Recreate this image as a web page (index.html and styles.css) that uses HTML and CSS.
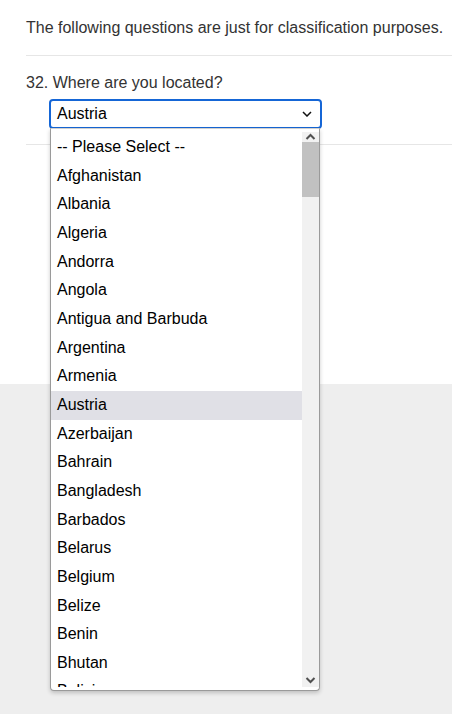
FILE: index.html
```html
<!DOCTYPE html>
<html>
<head>
<meta charset="utf-8">
<link rel="stylesheet" href="styles.css">
</head>
<body>
<div class="page">
  <section class="content">
    <p class="intro">The following questions are just for classification purposes.</p>
    <hr class="rule">
    <div class="question">
      <label class="q-label">32. Where are you located?</label>
      <div class="select">
        <span class="select-value">Austria</span>
        <svg class="chev" width="10" height="6" viewBox="0 0 10 6"><polyline points="1,1 5,5 9,1" fill="none" stroke="#111" stroke-width="1.5"/></svg>
      </div>
    </div>
    <hr class="rule rule-2">
  </section>
  <div class="footer-area"></div>

  <div class="dropdown">
    <ul class="options">
      <li>-- Please Select --</li>
      <li>Afghanistan</li>
      <li>Albania</li>
      <li>Algeria</li>
      <li>Andorra</li>
      <li>Angola</li>
      <li>Antigua and Barbuda</li>
      <li>Argentina</li>
      <li>Armenia</li>
      <li class="selected">Austria</li>
      <li>Azerbaijan</li>
      <li>Bahrain</li>
      <li>Bangladesh</li>
      <li>Barbados</li>
      <li>Belarus</li>
      <li>Belgium</li>
      <li>Belize</li>
      <li>Benin</li>
      <li>Bhutan</li>
      <li>Bolivia</li>
    </ul>
    <div class="scrollbar">
      <svg class="arrow" width="17" height="10" viewBox="0 0 17 10"><polyline points="4.5,7 8.5,3 12.5,7" fill="none" stroke="#505050" stroke-width="2"/></svg>
      <div class="thumb"></div>
      <div class="track"></div>
      <svg class="arrow" width="17" height="14" viewBox="0 0 17 14"><polyline points="4.5,5 8.5,9 12.5,5" fill="none" stroke="#505050" stroke-width="2"/></svg>
    </div>
  </div>
</div>
</body>
</html>
```

FILE: styles.css
```css
* { box-sizing: border-box; }
html, body {
  margin: 0;
  padding: 0;
}
body {
  font-family: "Liberation Sans", Arial, sans-serif;
  font-size: 16px;
  color: #333;
  width: 452px;
  height: 714px;
  overflow: hidden;
}
.page {
  position: relative;
  height: 714px;
  display: flex;
  flex-direction: column;
}
.content {
  height: 384px;
  background: #fff;
  padding-left: 26px;
}
.intro {
  margin: 0;
  padding-top: 18px;
  line-height: 20px;
  white-space: nowrap;
}
.rule {
  margin: 17px 0 0 0;
  border: 0;
  border-top: 1px solid #e6e6e6;
  height: 0;
}
.rule-2 {
  margin-top: 15px;
}
.question {
  padding-top: 17px;
}
.q-label {
  display: block;
  line-height: 20px;
}
.select {
  margin: 6px 0 0 23px;
  width: 273px;
  height: 30px;
  border: 2px solid #1566d6;
  border-radius: 4px;
  display: flex;
  align-items: center;
  justify-content: space-between;
  padding: 0 8px 0 6px;
  color: #000;
  background: #fff;
}
.chev { display: block; }
.footer-area {
  flex: 1;
  background: #eeeeee;
}
.dropdown {
  position: absolute;
  left: 50px;
  top: 128px;
  width: 270px;
  height: 563px;
  background: #fff;
  border: 1px solid #9a9a9a;
  border-top-color: #d0d0d0;
  border-radius: 0 0 4px 4px;
  box-shadow: 0 2px 4px rgba(0,0,0,0.2);
  padding-top: 3px;
  padding-bottom: 3px;
  display: flex;
  overflow: hidden;
}
.options {
  list-style: none;
  margin: 0;
  padding: 1px 0 0 0;
  flex: 1;
  overflow: hidden;
  color: #000;
}
.options li {
  height: 28.67px;
  line-height: 28.67px;
  padding-left: 6px;
  white-space: nowrap;
}
.options li.selected {
  background: #e0e0e6;
}
.scrollbar {
  width: 17px;
  background: #f1f1f1;
  display: flex;
  flex-direction: column;
}
.arrow { display: block; flex: none; }
.thumb {
  height: 55px;
  background: #c1c1c1;
}
.track { flex: 1; }
```
